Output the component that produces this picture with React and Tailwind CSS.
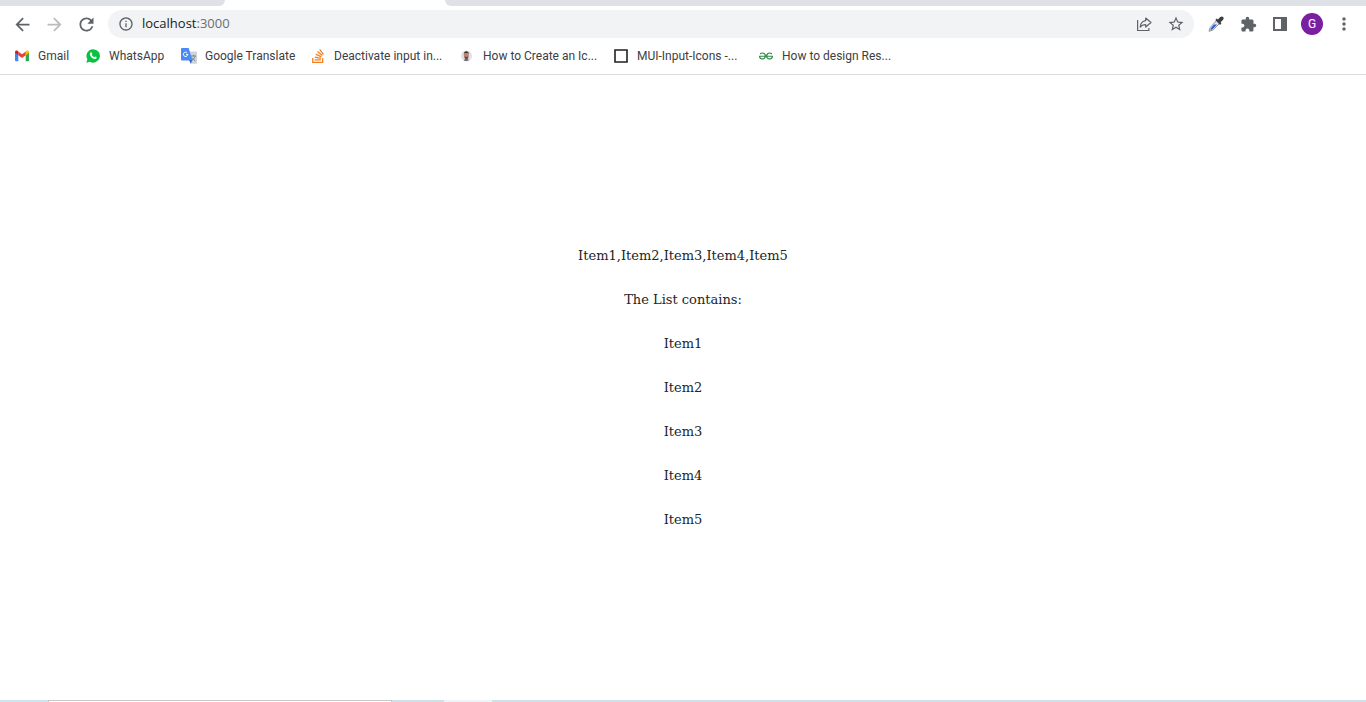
import { MdArrowBack, MdArrowForward, MdRefresh, MdInfoOutline, MdStarBorder, MdExtension, MdMoreVert } from "react-icons/md";
import { FaStackOverflow } from "react-icons/fa";
import { SiGeeksforgeeks } from "react-icons/si";

const Gmail = () => (
  <svg viewBox="0 0 16 16" className="size-4">
    <path d="M1 4.2v8.1c0 .5.4.9.9.9h2.4V6.8z" fill="#4285f4" />
    <path d="M11.7 13.2h2.4c.5 0 .9-.4.9-.9V4.2l-3.3 2.6z" fill="#34a853" />
    <path d="M11.7 3.4v3.900L15 4.800V4c0-1.400-1.500-2-2.500-1.200z" fill="#fbbc04" />
    <path d="M4.300 7.300V3.400L8 6.200l3.700-2.800v3.900L8 10.100z" fill="#ea4335" />
    <path d="M1 4v.8l3.300 2.500V3.400l-.8-.6C2.500 2 1 2.600 1 4z" fill="#c5221f" />
  </svg>
);

const WhatsApp = () => (
  <svg viewBox="0 0 16 16" className="size-4">
    <path d="M8.2 1.2a6.7 6.7 0 1 1-3.3 12.5L1.3 14.8l1.1-3.5A6.7 6.7 0 0 1 8.2 1.2z" fill="#0ac143" />
    <path d="M5.6 4.600c.5-.4 1-.3 1.200.2l.5 1.200c.1.400-.5.9-.5 1.100.5.9 1.300 1.700 2.300 2.100.3 0 .7-.9 1-.8l1.400.7c.3.200.1 1-.3 1.400-.7.7-1.700.6-2.700.2a7 7 0 0 1-3.300-3.300c-.4-1-.3-2.200.4-2.800z" fill="#fff" />
  </svg>
);

const Translate = () => (
  <svg viewBox="0 0 16 16" className="size-4">
    <path d="M7 3.500h8.200c.4 0 .8.400.8.800V15c0 .5-.4.800-.8.800H10z" fill="#d0d3d6" />
    <path d="M10 8h5M12.500 7v1M14 8.200c-.5 2-1.800 3.400-3.500 4.500M11.200 9.800c.7 1.200 1.700 2.200 3 3" stroke="#6f8791" fill="none" />
    <path d="M8 12h3.200L9.800 15.800z" fill="#3253b4" />
    <path d="M.9 0h6.700l4 12.500H.9c-.5 0-.9-.4-.9-.9V.9C0 .4.400 0 .9 0z" fill="#4a8af4" />
    <path d="M6.200 4.800a2.200 2.200 0 1 0 .6 1.600H5" stroke="#fff" fill="none" />
  </svg>
);

const Portrait = () => (
  <svg viewBox="0 0 16 16" className="size-4">
    <circle cx="7.500" cy="8" r="5.500" fill="#e1e2e6" />
    <path d="M5 12.500C5.300 10.800 6.500 10.500 7.500 10.500s2 .5 2.300 1.800A5 5 0 0 1 5 12.500z" fill="#686e88" />
    <ellipse cx="7.300" cy="7.600" rx="2.500" ry="3.400" fill="#bd8472" />
    <path d="M4.800 6.500c-.3-4.200 5.400-4.200 5 0L9 5H5.600z" fill="#38302f" />
    <path d="M5.400 8.800h4L8.400 11H6.600z" fill="#684641" />
  </svg>
);

const Square = () => (
  <svg viewBox="0 0 16 16" className="size-4"><path d="M2 2h12v12H2z" fill="none" stroke="#202124" strokeWidth="1.600" /></svg>
);

const Share = () => (
  <svg viewBox="0 0 18 18" className="size-[18px]" fill="none" stroke="#5f6368" strokeWidth="1.200">
    <path d="M2.600 5v10.500h11.300V13" />
    <path d="M10.700 3l5.300 4.500-5.300 4.500V9.600c-2.600 0-4.200.7-5.500 2.500.3-3.600 2-6 5.500-6.500z" strokeLinejoin="round" />
  </svg>
);

const Dropper = () => (
  <svg viewBox="0 0 16 16" className="size-4">
    <path d="M8.800 4.200l3 3-7.200 7L1 15.300l1.100-3.600z" fill="#dce4f5" stroke="#8f939c" strokeWidth="1" />
    <path d="M6 8.600h3L4.200 13.500 2.400 14l.7-2z" fill="#2f5be0" />
    <path d="M7.300 4l1.400-1.400 1.200.8L12 1.300C14.300-.7 17 1.800 14.900 4l-2.300 2.200.8 1.300L12 8.900z" fill="#3e3d40" />
  </svg>
);

const SidePanel = () => (
  <svg viewBox="0 0 16 16" className="size-4"><path d="M1 1h14v14H1z M3 3v10h6V3z" fill="#5f6368" fillRule="evenodd" /></svg>
);

const bookmarks = [
  { label: "Gmail", icon: <Gmail />, width: "w-[31px]" },
  { label: "WhatsApp", icon: <WhatsApp />, width: "w-14" },
  { label: "Google Translate", icon: <Translate />, width: "w-[89px]" },
  { label: "Deactivate input in...", icon: <FaStackOverflow className="size-4 text-[#f48024]" />, width: "w-[109px]" },
  { label: "How to Create an Ic...", icon: <Portrait />, width: "w-[114px]" },
  { label: "MUI-Input-Icons -...", icon: <Square />, width: "w-[105px]" },
  { label: "How to design Res...", icon: <SiGeeksforgeeks className="size-4 px-px text-[#2f8d46]" />, width: "w-[108px]" },
];

const items = ["Item1", "Item2", "Item3", "Item4", "Item5"];

function IconButton({ label, children }) {
  return <button type="button" aria-label={label} className="flex size-6 items-center justify-center text-[#5f6368]">{children}</button>;
}

export default function App() {
  return (
    <div className="flex min-h-screen flex-col bg-white">
      <header className="border-b border-[#dadce0] font-['Open_Sans',sans-serif]">
        <div className="flex h-1.5">
          <div className="w-[225px] rounded-br-md bg-[#dee1e6]" />
          <div className="w-[220px]" />
          <div className="flex-1 rounded-bl-md bg-[#dee1e6]" />
        </div>
        <div className="flex h-9 items-center gap-2 px-2.5">
          <IconButton label="Back"><MdArrowBack size={21} /></IconButton>
          <IconButton label="Forward"><MdArrowForward size={21} className="text-[#babcbe]" /></IconButton>
          <IconButton label="Reload"><MdRefresh size={21} /></IconButton>
          <div className="ml-0.5 flex h-7 flex-1 items-center gap-2 rounded-full bg-[#f1f3f4] pr-1.5 pl-2.5">
            <MdInfoOutline size={16} className="text-[#5f6368]" />
            <div role="textbox" aria-label="Address" className="flex-1 text-[13px] text-[#202124]">
              localhost<span className="text-[#6b6f74]">:3000</span>
            </div>
            <IconButton label="Share"><Share /></IconButton>
            <IconButton label="Bookmark this page"><MdStarBorder size={18} /></IconButton>
          </div>
          <div className="ml-0.5 flex items-center gap-2">
            <IconButton label="Color picker"><Dropper /></IconButton>
            <IconButton label="Extensions"><MdExtension size={17} /></IconButton>
            <IconButton label="Side panel"><SidePanel /></IconButton>
            <button type="button" className="flex size-6 items-center justify-center">
              <span className="flex size-[22px] items-center justify-center rounded-full bg-[#7b1fa2] font-[Roboto,sans-serif] text-xs text-white">G</span>
            </button>
            <IconButton label="Menu"><MdMoreVert size={20} /></IconButton>
          </div>
        </div>
        <nav aria-label="Bookmarks" className="flex h-8 items-center gap-4 px-3.5 pb-1 font-[Roboto,sans-serif]">
          {bookmarks.map((b) => (
            <a key={b.label} href="#" className="flex items-center gap-2 text-xs whitespace-nowrap text-[#3c4043]">
              {b.icon}
              <span className={b.width}>{b.label}</span>
            </a>
          ))}
        </nav>
      </header>
      <main className="flex flex-1 flex-col items-center justify-center gap-6 font-['DejaVu_Serif',serif] text-[13px] leading-5 text-[#212529]">
        <p>{items.join()}</p>
        <p>The List contains:</p>
        {items.map((item) => <p key={item}>{item}</p>)}
      </main>
      <footer className="flex h-0.5 bg-[#cfe0e8]">
        <div className="w-12 bg-[#cce6ee]" />
        <div className="w-[344px] border border-b-0 border-[#c8c8c8] bg-white" />
        <div className="w-[52px]" />
        <div className="w-12 bg-[#eef3f7]" />
      </footer>
    </div>
  );
}
